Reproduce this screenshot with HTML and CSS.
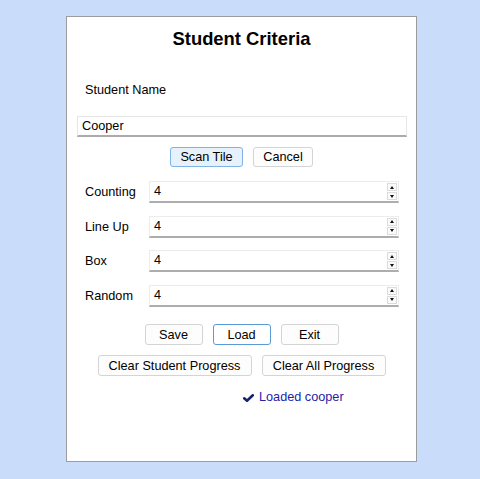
FILE: index.html
```html
<!DOCTYPE html>
<html>
<head>
<meta charset="utf-8">
<link rel="stylesheet" href="styles.css">
</head>
<body>
<div class="page">
  <div class="panel">
    <h1 class="title">Student Criteria</h1>
    <div class="name-label">Student Name</div>
    <input class="name-input" type="text" value="Cooper">
    <div class="btn-row scan-row">
      <button class="btn btn-default">Scan Tile</button>
      <button class="btn">Cancel</button>
    </div>
    <div class="criteria">
      <div class="crit-row">
        <span class="crit-label">Counting</span>
        <div class="numfield"><span class="numval">4</span><span class="spin"><span class="spin-up"></span><span class="spin-down"></span></span></div>
      </div>
      <div class="crit-row">
        <span class="crit-label">Line Up</span>
        <div class="numfield"><span class="numval">4</span><span class="spin"><span class="spin-up"></span><span class="spin-down"></span></span></div>
      </div>
      <div class="crit-row">
        <span class="crit-label">Box</span>
        <div class="numfield"><span class="numval">4</span><span class="spin"><span class="spin-up"></span><span class="spin-down"></span></span></div>
      </div>
      <div class="crit-row">
        <span class="crit-label">Random</span>
        <div class="numfield"><span class="numval">4</span><span class="spin"><span class="spin-up"></span><span class="spin-down"></span></span></div>
      </div>
    </div>
    <div class="btn-row action-row">
      <button class="btn btn-w58">Save</button>
      <button class="btn btn-w58 btn-focus">Load</button>
      <button class="btn btn-w58">Exit</button>
    </div>
    <div class="btn-row clear-row">
      <button class="btn btn-clear-student">Clear Student Progress</button>
      <button class="btn btn-clear-all">Clear All Progress</button>
    </div>
    <div class="status">
      <svg class="check" width="11" height="8" viewBox="0 0 11 8"><path d="M1.2 4.3 L4 6.7 L9.8 1.3" fill="none" stroke="#18226e" stroke-width="2.6" stroke-linecap="round" stroke-linejoin="round"/></svg>
      <span class="status-text">Loaded cooper</span>
    </div>
  </div>
</div>
</body>
</html>
```
FILE: styles.css
```css
html, body {
  margin: 0;
  padding: 0;
  background: #c9dcf9;
  font-family: "Liberation Sans", Arial, sans-serif;
  font-size: 12.7px;
  color: #000;
}
.page {
  padding: 16px 0 0 66px;
}
.panel {
  box-sizing: border-box;
  width: 351px;
  height: 446px;
  background: #fff;
  border: 1px solid #9c9c9c;
  padding-top: 11px;
}
.title {
  margin: 0;
  font-size: 18.4px;
  line-height: 21px;
  font-weight: bold;
  text-align: center;
  color: #000;
}
.name-label {
  margin-top: 33px;
  padding-left: 18px;
  line-height: 16px;
}
.name-input {
  display: block;
  box-sizing: border-box;
  margin: 18px 0 0 10px;
  width: 330px;
  height: 21px;
  padding: 0 0 0 4px;
  border: 1px solid #e6e6e6;
  border-bottom: 2px solid #ababab;
  font-family: inherit;
  font-size: 12.7px;
  color: #000;
  outline: none;
}
.btn-row {
  display: flex;
  justify-content: center;
  gap: 10px;
}
.scan-row {
  margin-top: 10px;
}
.btn {
  box-sizing: border-box;
  height: 21px;
  padding: 0;
  background: #fdfdfd;
  border: 1px solid #d4d4d4;
  border-radius: 3px;
  font-family: inherit;
  font-size: 12.7px;
  color: #000;
}
.scan-row .btn {
  height: 20px;
}
.scan-row .btn:first-child {
  width: 73px;
}
.scan-row .btn:last-child {
  width: 60px;
}
.btn-default {
  background: #e6f1fb;
  border-color: #7fb3e6;
}
.btn-focus {
  background: #fff;
  border-color: #5b9ad8;
}
.btn-w58 {
  width: 58px;
}
.btn-clear-student {
  width: 154px;
}
.btn-clear-all {
  width: 124px;
}
.criteria {
  margin-top: 14px;
  display: flex;
  flex-direction: column;
  gap: 12.5px;
}
.crit-row {
  display: flex;
  align-items: center;
  padding-left: 18px;
}
.crit-label {
  width: 64px;
}
.numfield {
  box-sizing: border-box;
  display: flex;
  width: 250px;
  height: 22px;
  border: 1px solid #ececec;
  border-bottom: 2px solid #adadad;
}
.numval {
  flex: 1;
  padding-left: 4px;
  line-height: 19px;
}
.spin {
  display: flex;
  flex-direction: column;
  gap: 1px;
  margin: 0 1px 0 0;
  padding-top: 1px;
}
.spin-up, .spin-down {
  box-sizing: border-box;
  width: 10px;
  height: 8px;
  border: 1px solid #dcdcdc;
  background: #fafafa;
  display: flex;
  align-items: center;
  justify-content: center;
}
.spin-up::after {
  content: "";
  border-left: 2.5px solid transparent;
  border-right: 2.5px solid transparent;
  border-bottom: 3px solid #111;
}
.spin-down::after {
  content: "";
  border-left: 2.5px solid transparent;
  border-right: 2.5px solid transparent;
  border-top: 3px solid #111;
}
.action-row {
  margin-top: 17.5px;
}
.clear-row {
  margin-top: 10px;
}
.status {
  margin-top: 13px;
  padding-left: 176px;
  display: flex;
  align-items: center;
  gap: 5px;
  line-height: 16px;
}
.check {
  display: block;
  margin-top: 2px;
}
.status-text {
  color: #2323a8;
}
```
